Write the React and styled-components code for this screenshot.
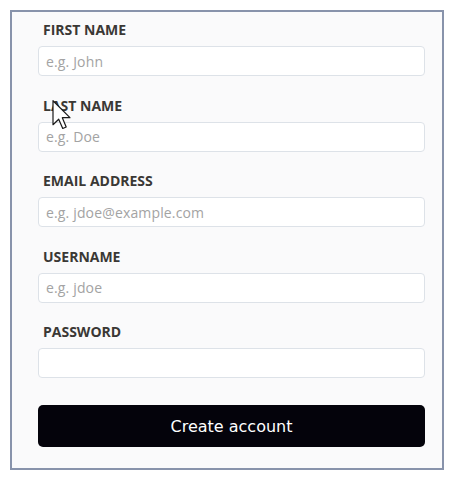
import React from "react"
import styled, { createGlobalStyle } from "styled-components"

const GlobalStyle = createGlobalStyle`
  body {
    margin: 0;
    background: #ffffff;
    font-family: "Open Sans", "Liberation Sans", sans-serif;
  }
`

const Page = styled.div`
  padding: 10px 9px 8px 10px;
`

const Card = styled.form`
  position: relative;
  box-sizing: border-box;
  width: 434px;
  height: 460px;
  border: 2px solid #8893ab;
  background: #fafafb;
  padding: 8px 17px 0 26px;
  display: flex;
  flex-direction: column;
`

const Field = styled.div`
  display: flex;
  flex-direction: column;
  margin-bottom: 19.5px;

  &:last-of-type {
    margin-bottom: 27px;
  }
`

const Label = styled.label`
  display: block;
  height: 18px;
  line-height: 18px;
  margin: 1px 0 7px 5px;
  font-size: 14px;
  font-weight: 700;
  color: #3a3835;
`

const Input = styled.input`
  box-sizing: border-box;
  width: 387px;
  height: 30px;
  border: 1px solid #dde2e8;
  border-radius: 4px;
  background: #ffffff;
  padding: 0 7px;
  font-family: "Open Sans", "Liberation Sans", sans-serif;
  font-size: 14px;
  letter-spacing: 0.15px;
  color: #333;
  outline: none;

  &::placeholder {
    color: #a3a3a3;
  }
`

const Button = styled.button`
  box-sizing: border-box;
  width: 387px;
  height: 42px;
  border: none;
  border-radius: 5px;
  background: #04030b;
  color: #ffffff;
  font-family: "DejaVu Sans", "Open Sans", sans-serif;
  font-size: 16px;
  cursor: pointer;
`

const Cursor = styled.svg`
  position: absolute;
  left: 40px;
  top: 88px;
  pointer-events: none;
`

const fields = [
  { label: "FIRST NAME", type: "text", placeholder: "e.g. John" },
  { label: "LAST NAME", type: "text", placeholder: "e.g. Doe" },
  { label: "EMAIL ADDRESS", type: "email", placeholder: "e.g. jdoe@example.com" },
  { label: "USERNAME", type: "text", placeholder: "e.g. jdoe" },
  { label: "PASSWORD", type: "password", placeholder: "" },
]

const App = () => {
  return (
    <Page>
      <GlobalStyle />
      <Card onSubmit={e => e.preventDefault()}>
        {fields.map(f => (
          <Field key={f.label}>
            <Label>{f.label}</Label>
            <Input type={f.type} placeholder={f.placeholder} />
          </Field>
        ))}
        <Button type="submit">Create account</Button>
        <Cursor width="20" height="30" viewBox="0 0 13 20">
          <path
            d="M0.5 0.5 L0.5 16.5 L4.3 12.8 L7 19 L9.3 18 L6.7 11.8 L11.8 11.8 Z"
            fill="#ffffff"
            stroke="#1a1a1a"
            strokeWidth="0.8"
            strokeLinejoin="round"
          />
        </Cursor>
      </Card>
    </Page>
  )
}

export default App
